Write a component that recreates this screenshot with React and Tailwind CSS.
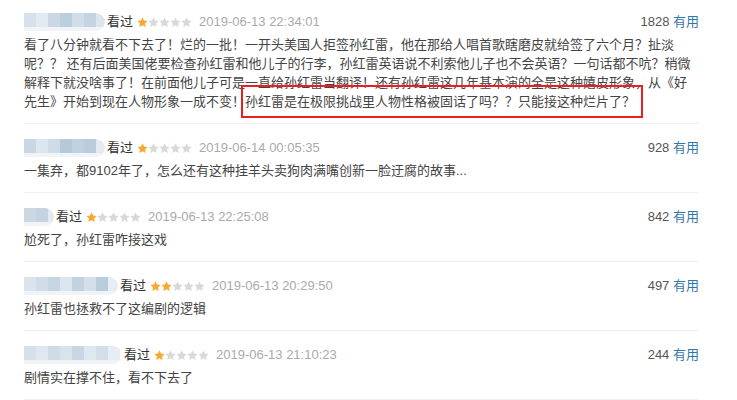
const reviews = [
  {
    nameWidth: 81,
    stars: 1,
    time: '2019-06-13 22:34:01',
    votes: 1828,
    mosaic: ['#d7e1ea', '#e3eaf1', '#cbd8e4', '#bccfdf', '#d2dde7', '#c4d4e2', '#dce5ed'],
  },
  {
    nameWidth: 81,
    stars: 1,
    time: '2019-06-14 00:05:35',
    votes: 928,
    mosaic: ['#c9d6e3', '#dde6ee', '#cfdbe6', '#b5c9da', '#c0d1df', '#b9ccdc', '#e4ebf2'],
    text: '一集弃，都9102年了，怎么还有这种挂羊头卖狗肉满嘴创新一脸迂腐的故事...',
  },
  {
    nameWidth: 30,
    stars: 1,
    time: '2019-06-13 22:25:08',
    votes: 842,
    mosaic: ['#cbd8e4', '#c3d3e1', '#e3eaf1'],
    text: '尬死了，孙红雷咋接这戏',
  },
  {
    nameWidth: 94,
    stars: 2,
    time: '2019-06-13 20:29:50',
    votes: 497,
    mosaic: ['#dbe4ec', '#d0dce7', '#c6d5e2', '#dde6ee', '#c2d2e0', '#d4dfe9', '#b9ccdc', '#e6edf3'],
    text: '孙红雷也拯救不了这编剧的逻辑',
  },
  {
    nameWidth: 98,
    stars: 1,
    time: '2019-06-13 21:10:23',
    votes: 244,
    mosaic: ['#d6e0ea', '#e0e8ef', '#cfdbe6', '#d9e3ec', '#c9d7e4', '#dfe7ef', '#d3dee8', '#e6edf3'],
    text: '剧情实在撑不住，看不下去了',
  },
];

function Star({ on }) {
  return (
    <svg width="11" height="11" viewBox="0 0 24 24" className="shrink-0">
      <path
        d="M12 0.8l3.4 7.1 7.8 1-5.7 5.4 1.5 7.7L12 18.2l-7 3.8 1.5-7.7L0.8 8.9l7.8-1z"
        fill={on ? '#f8a934' : '#d9d9d9'}
      />
    </svg>
  );
}

function Mosaic({ width, colors }) {
  return (
    <div className="relative h-[18px] overflow-hidden rounded-r-full blur-[0.6px]" style={{ width }}>
      <div className="flex h-[14px]">
        {colors.map((c, i) => (
          <div key={i} className="h-full w-[12px] shrink-0" style={{ backgroundColor: c }} />
        ))}
      </div>
      <div className="h-[4px] bg-[#f1f4f7]" />
    </div>
  );
}

function Header({ r }) {
  return (
    <div className="flex h-[22px] items-center text-[13px]">
      <Mosaic width={r.nameWidth} colors={r.mosaic} />
      <span className="ml-[2px] text-[#333]">看过</span>
      <span className="ml-[4px] flex">
        {[0, 1, 2, 3, 4].map((i) => (
          <Star key={i} on={i < r.stars} />
        ))}
      </span>
      <span className="ml-[7px] text-[#aaa]">{r.time}</span>
      <span className="ml-auto text-[#555]">
        {r.votes} <span className="text-[#37a]">有用</span>
      </span>
    </div>
  );
}

export default function App() {
  const first = reviews[0];
  return (
    <div
      className="h-[400px] w-[737px] overflow-hidden bg-white pl-[24px]"
      style={{ fontFamily: '"Liberation Sans", "Noto Sans CJK SC", sans-serif' }}
    >
      <div className="w-[675px]">
        {/* first review, long one with the highlighted sentence */}
        <div className="border-b border-[#eeeeee] pb-[12px] pt-[11px]">
          <Header r={first} />
          <div className="mt-[2px] whitespace-nowrap text-[13px] leading-[19px] text-[#444]">
            <div>看了八分钟就看不下去了！烂的一批！一开头美国人拒签孙红雷，他在那给人唱首歌瞎磨皮就给签了六个月？扯淡</div>
            <div>呢？？ 还有后面美国佬要检查孙红雷和他儿子的行李，孙红雷英语说不利索他儿子也不会英语？一句话都不吭？稍微</div>
            <div>解释下就没啥事了！在前面他儿子可是一直给孙红雷当翻译！还有孙红雷这几年基本演的全是这种嬉皮形象，从《好</div>
            <div>
              先生》开始到现在人物形象一成不变！
              <span className="relative">
                孙红雷是在极限挑战里人物性格被固话了吗？？只能接这种烂片了？
                <span className="absolute -bottom-[9px] -left-[4px] -right-[8px] -top-[9px] border-[2.5px] border-[#e8201f]" />
              </span>
            </div>
          </div>
        </div>

        {reviews.slice(1).map((r, i) => (
          <div key={i} className="border-b border-[#eeeeee] pb-[12px] pt-[13px]">
            <Header r={r} />
            <div className="mt-[2px] text-[13px] leading-[19px] text-[#444]">{r.text}</div>
          </div>
        ))}
      </div>
    </div>
  );
}
